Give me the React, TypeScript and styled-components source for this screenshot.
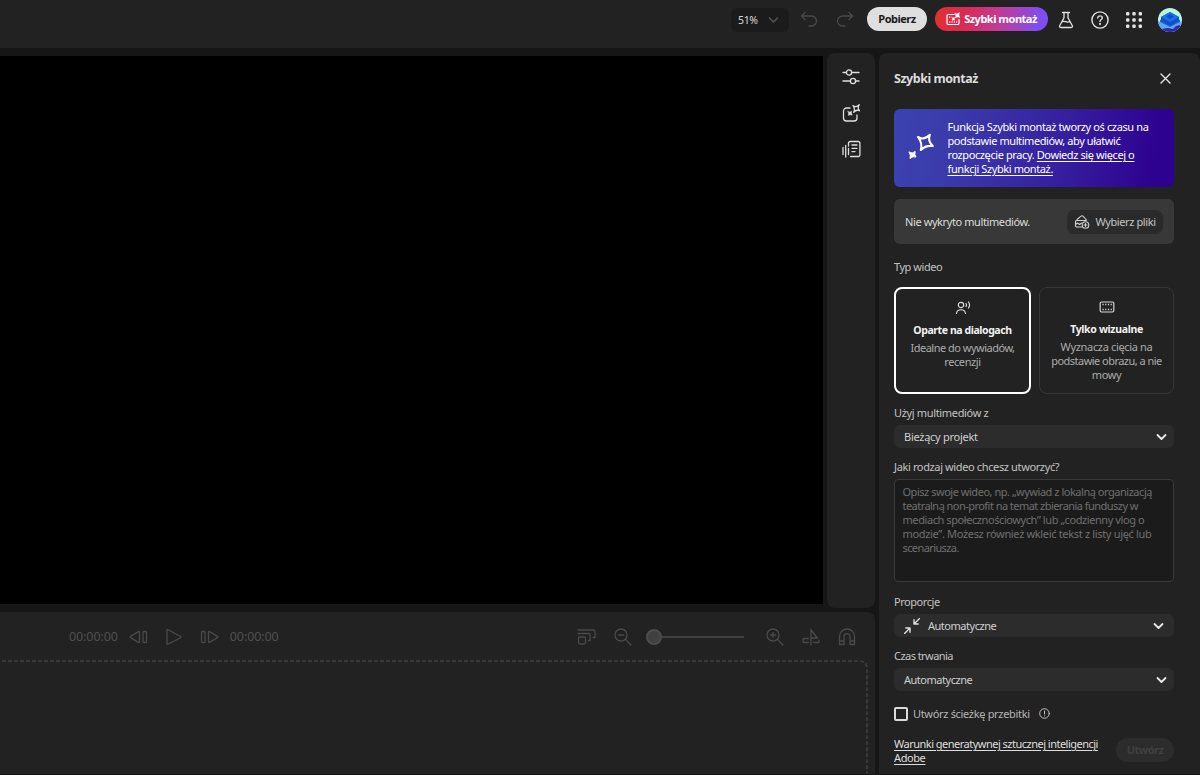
import React from "react";
import styled, { createGlobalStyle, css } from "styled-components";

const Global = createGlobalStyle`
  * { box-sizing: border-box; }
  html, body { margin: 0; background: #161616; }
  body { overflow: hidden; font-family: "Noto Sans", "Open Sans", sans-serif; }
  button, textarea { font-family: inherit; }
`;

const Page = styled.div`
  width: 1200px;
  height: 775px;
  padding-bottom: 1px;
  display: flex;
  flex-direction: column;
  gap: 5px;
  overflow: hidden;
  color: #d6d6d6;
  font-size: 11px;
  line-height: 14px;
`;

const Text = styled.span<{ $ls?: number; $size?: number; $color?: string; $bold?: boolean }>`
  white-space: nowrap;
  letter-spacing: ${(p) => p.$ls ?? -0.4}px;
  ${(p) => p.$size && css`font-size: ${p.$size}px;`}
  ${(p) => p.$color && css`color: ${p.$color};`}
  ${(p) => p.$bold && css`font-weight: 700;`}
`;

const TopBar = styled.header`
  height: 48px;
  flex: none;
  background: #222;
  display: flex;
  justify-content: flex-end;
  align-items: flex-start;
  padding: 7px 17px 0 0;
`;

const TopItem = styled.div<{ $w: number; $ml?: number }>`
  width: ${(p) => p.$w}px;
  height: 26px;
  margin-left: ${(p) => p.$ml ?? 0}px;
  display: flex;
  align-items: center;
  justify-content: center;
`;

const ZoomSelect = styled.div`
  width: 58px;
  height: 24px;
  margin-top: 1px;
  border-radius: 6px;
  background: #1b1b1b;
  display: flex;
  align-items: center;
  justify-content: space-between;
  padding: 0 10px 0 7px;
`;

const Pill = styled.button<{ $w: number; $bg: string; $color: string; $ml?: number; $mt?: number }>`
  width: ${(p) => p.$w}px;
  height: 24px;
  flex: none;
  margin: ${(p) => p.$mt ?? 0}px 0 0 ${(p) => p.$ml ?? 0}px;
  padding: 0;
  border: 0;
  border-radius: 12px;
  background: ${(p) => p.$bg};
  color: ${(p) => p.$color};
  font-size: 11px;
  line-height: 14px;
  font-weight: 700;
  display: flex;
  align-items: center;
  justify-content: center;
  gap: 4px;
`;

const Main = styled.div`
  flex: 1;
  min-height: 0;
  display: flex;
  gap: 4px;
`;

const Left = styled.div`
  width: 875px;
  display: flex;
  flex-direction: column;
  gap: 4px;
`;

const Stage = styled.div`
  height: 555px;
  flex: none;
  display: flex;
  justify-content: space-between;
`;

const Preview = styled.div`
  width: 823px;
  height: 548px;
  margin-top: 3px;
  background: #000;
`;

const Rail = styled.nav`
  width: 48px;
  border-radius: 8px;
  background: #222;
  display: flex;
  flex-direction: column;
  align-items: center;
  padding-top: 11.5px;
  gap: 12px;
`;

const RailItem = styled.div`
  width: 24px;
  height: 24px;
  display: grid;
  place-items: center;
`;

const Timeline = styled.section`
  flex: 1;
  min-height: 0;
  overflow: hidden;
  background: #222;
  border-radius: 0 8px 0 0;
  display: flex;
  flex-direction: column;
`;

const Controls = styled.div`
  height: 48px;
  flex: none;
  display: flex;
  align-items: center;
  justify-content: space-between;
  padding: 1px 19px 0 69px;
  color: #4a4a4a;
`;

const Group = styled.div<{ $gap: number }>`
  display: flex;
  align-items: center;
  gap: ${(p) => p.$gap}px;
`;

const Slider = styled.div`
  width: 98px;
  height: 16px;
  display: flex;
  align-items: center;
  margin: 0 13px 0 5px;
`;
const Knob = styled.div`
  width: 16px;
  height: 16px;
  border-radius: 50%;
  border: 2px solid #4c4c4c;
  background: #404040;
`;
const Track = styled.div`
  flex: 1;
  height: 2px;
  background: #404040;
`;

const Drop = styled.div`
  flex: 1;
  margin: 0 7px 0 -10px;
  display: flex;
`;

const Panel = styled.aside`
  width: 321px;
  background: #222;
  border-radius: 8px 8px 0 0;
  padding: 0 26px 0 15px;
  display: flex;
  flex-direction: column;
`;

const PanelHead = styled.div`
  height: 56px;
  flex: none;
  padding: 0 3px 5px 0;
  display: flex;
  align-items: center;
  justify-content: space-between;
`;

const Banner = styled.div`
  height: 78px;
  flex: none;
  border-radius: 6px;
  background: linear-gradient(100deg, #3b43b0 0%, #3b3bab 20%, #3620a0 58%, #2d0290 92%);
  color: #fff;
  display: flex;
  align-items: center;
  padding: 0 0 0 13px;
  gap: 11.5px;
  a { color: #fff; text-decoration: underline; text-underline-offset: 1.5px; }
`;

const MediaRow = styled.div`
  height: 45.5px;
  flex: none;
  margin-top: 11.5px;
  border-radius: 6px;
  background: #383838;
  display: flex;
  align-items: center;
  justify-content: space-between;
  padding: 1px 11px 0;
`;

const FileButton = styled.button`
  width: 96px;
  height: 24px;
  padding: 0;
  border: 0;
  border-radius: 7px;
  background: #2a2a2a;
  color: #c4c4c4;
  font-size: 11px;
  line-height: 14px;
  display: flex;
  align-items: center;
  justify-content: center;
  gap: 5px;
`;

const Label = styled.div<{ $h: number; $pb: number }>`
  height: ${(p) => p.$h}px;
  flex: none;
  display: flex;
  align-items: flex-end;
  padding-bottom: ${(p) => p.$pb}px;
  color: #c2c2c2;
`;

const Cards = styled.div`
  height: 107px;
  flex: none;
  display: flex;
  justify-content: space-between;
`;

const Card = styled.div<{ $on?: boolean }>`
  width: ${(p) => (p.$on ? 137 : 135)}px;
  border: ${(p) => (p.$on ? "2px solid #fff" : "1px solid #363636")};
  border-radius: 8px;
  display: flex;
  flex-direction: column;
  align-items: center;
  padding-top: 12px;
  text-align: center;
  color: #ababab;
`;
const CardTitle = styled.div`
  margin: 8px 0 4px;
  color: #f2f2f2;
`;

const Select = styled.div<{ $pr?: number }>`
  height: 23px;
  flex: none;
  border-radius: 6px;
  background: #2c2c2c;
  color: #cfcfcf;
  display: flex;
  align-items: center;
  justify-content: space-between;
  padding: 0 ${(p) => p.$pr ?? 7.5}px 0 10px;
`;

const Prompt = styled.div`
  height: 103px;
  flex: none;
  border: 1px solid #3a3a3a;
  border-radius: 4px;
  background: #1b1b1b;
  color: #6f6f6f;
  padding: 5px 7.5px;
`;

const CheckRow = styled.div`
  height: 14px;
  flex: none;
  margin-top: 15.5px;
  display: flex;
  align-items: center;
  color: #b5b5b5;
`;
const Box = styled.span`
  width: 14px;
  height: 14px;
  margin-right: 5px;
  border: 2px solid #dadada;
  border-radius: 2px;
`;
const Info = styled.span`
  margin-left: 9px;
`;

const Footer = styled.footer`
  margin-top: 16.5px;
  display: flex;
  align-items: flex-start;
  justify-content: space-between;
  a { color: #dedede; text-decoration: underline; text-underline-offset: 1.5px; }
`;

const Svg = ({ w, h = w, vb = `0 0 ${w} ${h}`, sw = 1.3, color = "currentColor", children }: {
  w: number; h?: number; vb?: string; sw?: number; color?: string; children: React.ReactNode;
}) => (
  <svg width={w} height={h} viewBox={vb} fill="none" stroke={color} strokeWidth={sw}
    strokeLinecap="round" strokeLinejoin="round" display="block">
    {children}
  </svg>
);

const Chevron = ({ color = "#e8e8e8", sw = 1.8 }) => (
  <Svg w={11} h={8} sw={sw} color={color}><path d="M1.5 2 5.5 6l4-4" /></Svg>
);

const QuickCutIcon = () => (
  <Svg w={14} sw={1.2} color="#fff">
    <path d="M8 2.500H2.300A1.300 1.300 0 0 0 1 3.800v7.400a1.300 1.300 0 0 0 1.300 1.300h9.400a1.300 1.300 0 0 0 1.300-1.300V7.500" />
    <path d="M3.200 10h8M3.200 5h2.500" strokeDasharray="1 1.300" strokeLinecap="butt" strokeWidth="1.400" />
    <path d="M9 1.400Q11 2.500 13.500.6 12.200 3 13.800 5.400 11.500 4.500 9.500 6 10.400 3.700 9 1.400z" fill="#fff" strokeWidth=".4" />
    <path d="M6 5.600Q7.300 6.200 8.600 5.400 8 6.900 8.800 8.200 7.500 7.600 6.200 8.400 6.800 7 6 5.600z" fill="#fff" strokeWidth=".3" />
  </Svg>
);

const Avatar = () => (
  <svg width="24" height="24" viewBox="0 0 24 24" display="block">
    <defs><clipPath id="avatar"><circle cx="12" cy="12" r="12" /></clipPath></defs>
    <g clipPath="url(#avatar)">
      <path fill="#b9f7dc" d="M0 0h24v24H0z" />
      <path fill="#1d68dc" d="M2 12 12 7l10 5v3l-10 6-10-6z" />
      <path fill="#63a4f5" d="m0 13 12 6 12-6v11H0z" />
      <path fill="#3327a8" d="m3 21 7-1 5 1 3-3 4-1v7H6z" />
      <path fill="#1251c5" d="m3 9 9-5 9 5v4l-9 5-9-5z" />
      <path fill="#1b6ff0" d="m3 9 9-5 9 5-9 5z" />
      <path fill="#1250c8" d="m8 8.500 4-2.500 4 2.500-4 2.500z" />
    </g>
  </svg>
);

export default function App() {
  return (
    <>
      <Global />
      <Page>
        <TopBar>
          <ZoomSelect>
            <Text $size={10.5} $ls={-0.35}>51%</Text>
            <Chevron color="#505050" sw={1.7} />
          </ZoomSelect>
          <TopItem $w={20} $ml={10}>
            <Svg w={18} color="#494949"><path d="M5 1.500 1.500 5 5 8.500M2 5h9.500a5 5 0 0 1 0 10H9" /></Svg>
          </TopItem>
          <TopItem $w={20} $ml={16}>
            <Svg w={18} color="#494949"><path d="M13 1.500 16.500 5 13 8.500M16 5H6.500a5 5 0 0 0 0 10H9" /></Svg>
          </TopItem>
          <Pill $w={60} $ml={12} $bg="#dfdfdf" $color="#1b1b1b"><Text $ls={-0.5}>Pobierz</Text></Pill>
          <Pill $w={113} $ml={8} $color="#fff"
            $bg="linear-gradient(100deg, #e2302f 0%, #db2a55 28%, #c43a92 55%, #7d4ef2 92%)">
            <QuickCutIcon /><Text $ls={-0.5}>Szybki montaż</Text>
          </Pill>
          <TopItem $w={20} $ml={8}>
            <Svg w={16} h={18} color="#e2e2e2">
              <path d="M4.500 1.500h7M6 1.500v5.300L1.800 14.500q-1 2 1.200 2h10q2.200 0 1.200-2L10 6.800V1.500M4.300 10.700c2.500-1.200 4 1.300 7.400 0" />
            </Svg>
          </TopItem>
          <TopItem $w={20} $ml={14}>
            <Svg w={18} color="#e2e2e2" sw={1.4}>
              <circle cx="9" cy="9" r="8.100" />
              <path d="M6.700 7.100A2.200 2.200 0 0 1 9 4.900c1.400 0 2.300.8 2.300 2 0 1.600-2.300 1.700-2.300 3.500" />
              <circle cx="9" cy="12.900" r=".4" fill="#e2e2e2" />
            </Svg>
          </TopItem>
          <TopItem $w={20} $ml={14}>
            <svg width="16" height="16" viewBox="0 0 16 16" fill="#e2e2e2">
              {[0, 6.3, 12.6].map((y) => [0, 6.3, 12.6].map((x) => (
                <rect key={`${x}-${y}`} x={x} y={y} width="3.400" height="3.400" rx="1" />
              )))}
            </svg>
          </TopItem>
          <TopItem $w={26} $ml={13}><Avatar /></TopItem>
        </TopBar>

        <Main>
          <Left>
            <Stage>
              <Preview />
              <Rail>
                <RailItem>
                  <Svg w={18} color="#dedede">
                    <path d="M1 4.500h3.300M9.700 4.500H17M1 13h7.300M13.700 13H17" />
                    <circle cx="7" cy="4.500" r="2.600" /><circle cx="11" cy="13" r="2.600" />
                  </Svg>
                </RailItem>
                <RailItem>
                  <Svg w={18} color="#dedede">
                    <path d="M8 4H4.500a3 3 0 0 0-3 3v7a3 3 0 0 0 3 3H12a3 3 0 0 0 3-3v-3" />
                    <path d="M11 1.700Q14 4 17.200.8 15 4 17.500 6.800 14.500 5.200 11.700 8.200 13.500 4.800 11 1.700z" />
                    <path d="M5.800 7.300Q7.800 8.500 9.800 7.200 9 9.200 10.200 11.200 8.200 10.200 6.300 11.400 7.200 9.300 5.800 7.300z" fill="#dedede" strokeWidth=".4" />
                  </Svg>
                </RailItem>
                <RailItem>
                  <Svg w={19} h={18} color="#dedede">
                    <path d="M6.500 6V3.200A1.700 1.700 0 0 1 8.200 1.500h8A1.700 1.700 0 0 1 17.900 3.200v11.600a1.700 1.700 0 0 1-1.700 1.700H8.500M10 5h5M10 8.300h5M10 11.600h3M1 7.500v7M3.700 5.500V17M6.500 8.500v6" />
                  </Svg>
                </RailItem>
              </Rail>
            </Stage>

            <Timeline>
              <Controls>
                <Group $gap={11}>
                  <Text $size={12.5} $ls={-0.1} $color="#505050">00:00:00</Text>
                  <Group $gap={17}>
                    <Svg w={19} h={14}>
                      <path d="M10.500 2.200v9.600q0 1.200-1 .6L1.500 7.600q-.8-.6 0-1.200l8-4.800q1-.6 1 .6z" />
                      <rect x="14" y="1.500" width="3.500" height="11" rx="1" />
                    </Svg>
                    <Svg w={18}><path d="M2 2.200v13.600q0 1 1 .500L15.500 9.700q1-.7 0-1.400L3 1.700q-1-.5-1 .5z" /></Svg>
                    <Svg w={19} h={14}>
                      <path d="M8.500 2.200v9.600q0 1.200 1 .6l8-4.800q.8-.6 0-1.200l-8-4.800q-1-.6-1 .6z" />
                      <rect x="1.500" y="1.500" width="3.500" height="11" rx="1" />
                    </Svg>
                  </Group>
                  <Text $size={12.5} $ls={-0.1} $color="#505050">00:00:00</Text>
                </Group>
                <Group $gap={18}>
                  <Svg w={19} h={18}>
                    <rect x="1.500" y="9" width="7" height="7" rx="1.500" />
                    <path d="M1 5.500h10.500a1.500 1.500 0 0 1 1.500 1.500v5.500h-1.500M1 2h15.500A1.500 1.500 0 0 1 18 3.500V9.500h-1.800" />
                  </Svg>
                  <Group $gap={9}>
                    <Svg w={18}><circle cx="7" cy="7" r="6" /><path d="m11.500 11.500 5.500 5.500M4.500 7h5" /></Svg>
                    <Slider><Knob /><Track /></Slider>
                    <Svg w={18}><circle cx="7" cy="7" r="6" /><path d="m11.500 11.500 5.500 5.500M4.500 7h5M7 4.500v5" /></Svg>
                  </Group>
                  <Svg w={18}>
                    <path d="M9 1v16M9 2l6.500 8H9M6.500 10.500H2.200A1.200 1.200 0 0 0 1 11.700v1.600a1.200 1.200 0 0 0 1.200 1.200h4.300M11.500 14.500h4.300A1.200 1.200 0 0 0 17 13.300V12" />
                  </Svg>
                  <Svg w={18}>
                    <path d="M1.500 16.500V8.500a7.500 7.500 0 0 1 15 0v8H12V8.700a3 3 0 0 0-6 0v7.800zM1.500 13H6M12 13h4.500" />
                  </Svg>
                </Group>
              </Controls>
              <Drop>
                <svg width="878" height="120" fill="none" stroke="#393939" strokeWidth="2" strokeDasharray="4 2">
                  <path d="M0 1h869q8 0 8 8v111" />
                </svg>
              </Drop>
            </Timeline>
          </Left>

          <Panel>
            <PanelHead>
              <Text $bold $size={12.5} $ls={-0.47} $color="#dcdcdc">Szybki montaż</Text>
              <Svg w={11} color="#e4e4e4" sw={1.4}><path d="m1 1 9 9M10 1l-9 9" /></Svg>
            </PanelHead>
            <Banner>
              <Svg w={29} h={34} color="#fff" sw={2.1}>
                <path d="M11 6Q17 9.800 22.800 3.800 20.500 10 25.800 15 18.800 14 13.800 19 15.800 12.500 11 6z" />
                <path d="M2.200 21.200Q5.300 23.200 8.200 20.500 7 23.500 9 26 6 24.800 3 27.400 4.200 24.300 2.200 21.200z" fill="#fff" strokeWidth="1" />
              </Svg>
              <div>
                <Text $ls={-0.38}>Funkcja Szybki montaż tworzy oś czasu na</Text><br />
                <Text $ls={-0.42}>podstawie multimediów, aby ułatwić</Text><br />
                <Text>rozpoczęcie pracy. <a>Dowiedz się więcej o</a></Text><br />
                <Text><a>funkcji Szybki montaż.</a></Text>
              </div>
            </Banner>
            <MediaRow>
              <Text $color="#dcdcdc">Nie wykryto multimediów.</Text>
              <FileButton>
                <Svg w={16} sw={1.1} color="#cfcfcf">
                  <path d="M3 5.500 7 2.200a1.500 1.500 0 0 1 2 0L12.500 6M7.500 13H2.700A1.200 1.200 0 0 1 1.500 11.800V7.700A1.200 1.200 0 0 1 2.700 6.500H12M1.500 10.500l2-1.500 2 1.500L7.500 9" />
                  <circle cx="11.500" cy="11" r="3.300" /><path d="M11.500 9.500v3M10 11h3" />
                </Svg>
                <Text>Wybierz pliki</Text>
              </FileButton>
            </MediaRow>

            <Label $h={43} $pb={13}><Text $ls={-0.45}>Typ wideo</Text></Label>
            <Cards>
              <Card $on>
                <Svg w={16} h={14} color="#d8d8d8" sw={1.2}>
                  <circle cx="6" cy="4" r="2.700" />
                  <path d="M1.500 12.500c.6-5 8.400-5 9 0M11 2.500q1 1.500 0 3M13.500 1q2 3 0 6" />
                </Svg>
                <CardTitle><Text $bold $size={10.5} $ls={-0.42}>Oparte na dialogach</Text></CardTitle>
                <Text $ls={-0.5}>Idealne do wywiadów,</Text><Text>recenzji</Text>
              </Card>
              <Card>
                <Svg w={16} h={14} color="#d8d8d8" sw={1.2}>
                  <rect x="1.200" y="2" width="13.600" height="10" rx="1.200" />
                  <path d="M3.500 4.500h9.500M3.500 9.500h9.500" strokeDasharray="1.200 1.500" strokeLinecap="butt" strokeWidth="1.500" />
                </Svg>
                <CardTitle><Text $bold $size={10.5} $ls={-0.34}>Tylko wizualne</Text></CardTitle>
                <Text $ls={-0.34}>Wyznacza cięcia na</Text><Text $ls={-0.53}>podstawie obrazu, a nie</Text><Text>mowy</Text>
              </Card>
            </Cards>

            <Label $h={31} $pb={5}><Text $ls={-0.34}>Użyj multimediów z</Text></Label>
            <Select><Text $ls={-0.27}>Bieżący projekt</Text><Chevron /></Select>
            <Label $h={31} $pb={5}><Text $ls={-0.37}>Jaki rodzaj wideo chcesz utworzyć?</Text></Label>
            <Prompt>
              <Text $ls={-0.47}>Opisz swoje wideo, np. „wywiad z lokalną organizacją</Text><br />
              <Text $ls={-0.54}>teatralną non-profit na temat zbierania funduszy w</Text><br />
              <Text $ls={-0.42}>mediach społecznościowych” lub „codzienny vlog o</Text><br />
              <Text $ls={-0.33}>modzie”. Możesz również wkleić tekst z listy ujęć lub</Text><br />
              <Text $ls={-0.6}>scenariusza.</Text>
            </Prompt>
            <Label $h={32} $pb={5.5}><Text $ls={-0.45}>Proporcje</Text></Label>
            <Select $pr={10.5}>
              <Group $gap={8}>
                <Svg w={16} color="#e0e0e0" sw={1.4}>
                  <path d="M15.500.5 10 6M10 1.800V6h4.200M.5 15.500 6 10M1.800 10H6v4.200" />
                </Svg>
                <Text $ls={-0.48}>Automatyczne</Text>
              </Group>
              <Chevron />
            </Select>
            <Label $h={31} $pb={5}><Text $ls={-0.55}>Czas trwania</Text></Label>
            <Select><Text $ls={-0.48}>Automatyczne</Text><Chevron /></Select>
            <CheckRow>
              <Box /><Text $ls={-0.32}>Utwórz ścieżkę przebitki</Text>
              <Info>
                <Svg w={11} sw={1} color="#c0c0c0">
                  <circle cx="5.500" cy="5.500" r="4.800" /><path d="M5.500 3v3M5.500 7.900v.1" />
                </Svg>
              </Info>
            </CheckRow>
            <Footer>
              <a><Text $ls={-0.51}>Warunki generatywnej sztucznej inteligencji</Text><br /><Text>Adobe</Text></a>
              <Pill $w={58} $mt={1} $bg="#2c2c2c" $color="#404040"><Text $ls={-0.5}>Utwórz</Text></Pill>
            </Footer>
          </Panel>
        </Main>
      </Page>
    </>
  );
}
